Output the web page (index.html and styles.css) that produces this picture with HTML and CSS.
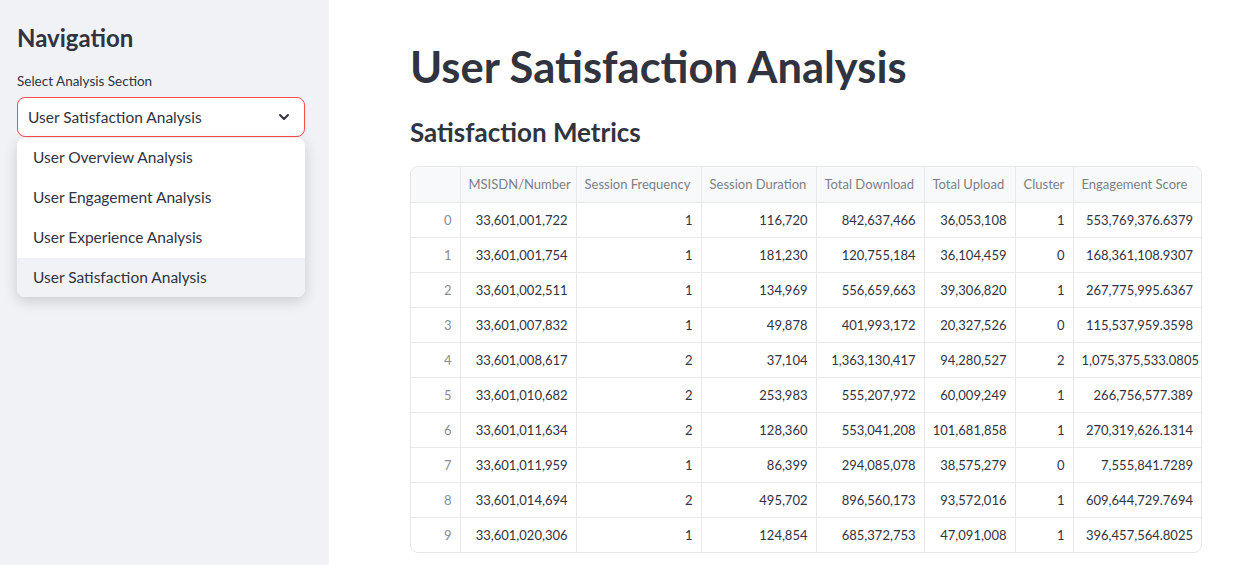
FILE: index.html
```html
<!DOCTYPE html>
<html lang="en">
<head>
<meta charset="utf-8">
<title>User Satisfaction Analysis</title>
<link rel="stylesheet" href="styles.css">
</head>
<body>
<div class="app">
  <aside class="sidebar">
    <h2 class="side-title">Navigation</h2>
    <div class="field-label">Select Analysis Section</div>
    <div class="select-wrap">
      <div class="select">
        <span class="select-value">User Satisfaction Analysis</span>
        <svg class="chev" width="16" height="16" viewBox="0 0 24 24"><path d="M6 9l6 6 6-6" fill="none" stroke="#31333f" stroke-width="3" stroke-linecap="round" stroke-linejoin="round"/></svg>
      </div>
      <ul class="menu">
        <li class="opt">User Overview Analysis</li>
        <li class="opt">User Engagement Analysis</li>
        <li class="opt">User Experience Analysis</li>
        <li class="opt active">User Satisfaction Analysis</li>
      </ul>
    </div>
  </aside>
  <main class="main">
    <h1 class="title">User Satisfaction Analysis</h1>
    <h2 class="subtitle">Satisfaction Metrics</h2>
    <div class="table-wrap">
      <table class="grid">
        <colgroup>
          <col class="c0"><col class="c1"><col class="c2"><col class="c3"><col class="c4"><col class="c5"><col class="c6"><col class="c7">
        </colgroup>
        <thead>
          <tr><th></th><th>MSISDN/Number</th><th>Session Frequency</th><th>Session Duration</th><th>Total Download</th><th>Total Upload</th><th>Cluster</th><th>Engagement Score</th></tr>
        </thead>
        <tbody>
          <tr><td class="idx">0</td><td>33,601,001,722</td><td>1</td><td>116,720</td><td>842,637,466</td><td>36,053,108</td><td>1</td><td>553,769,376.6379</td></tr>
          <tr><td class="idx">1</td><td>33,601,001,754</td><td>1</td><td>181,230</td><td>120,755,184</td><td>36,104,459</td><td>0</td><td>168,361,108.9307</td></tr>
          <tr><td class="idx">2</td><td>33,601,002,511</td><td>1</td><td>134,969</td><td>556,659,663</td><td>39,306,820</td><td>1</td><td>267,775,995.6367</td></tr>
          <tr><td class="idx">3</td><td>33,601,007,832</td><td>1</td><td>49,878</td><td>401,993,172</td><td>20,327,526</td><td>0</td><td>115,537,959.3598</td></tr>
          <tr><td class="idx">4</td><td>33,601,008,617</td><td>2</td><td>37,104</td><td>1,363,130,417</td><td>94,280,527</td><td>2</td><td>1,075,375,533.0805</td></tr>
          <tr><td class="idx">5</td><td>33,601,010,682</td><td>2</td><td>253,983</td><td>555,207,972</td><td>60,009,249</td><td>1</td><td>266,756,577.389</td></tr>
          <tr><td class="idx">6</td><td>33,601,011,634</td><td>2</td><td>128,360</td><td>553,041,208</td><td>101,681,858</td><td>1</td><td>270,319,626.1314</td></tr>
          <tr><td class="idx">7</td><td>33,601,011,959</td><td>1</td><td>86,399</td><td>294,085,078</td><td>38,575,279</td><td>0</td><td>7,555,841.7289</td></tr>
          <tr><td class="idx">8</td><td>33,601,014,694</td><td>2</td><td>495,702</td><td>896,560,173</td><td>93,572,016</td><td>1</td><td>609,644,729.7694</td></tr>
          <tr><td class="idx">9</td><td>33,601,020,306</td><td>1</td><td>124,854</td><td>685,372,753</td><td>47,091,008</td><td>1</td><td>396,457,564.8025</td></tr>
        </tbody>
      </table>
    </div>
  </main>
</div>
</body>
</html>
```

FILE: styles.css
```css
* { box-sizing: border-box; }
html, body { margin: 0; padding: 0; height: 100%; }
body {
  font-family: "Lato", "Noto Sans", "Liberation Sans", sans-serif;
  color: #31333f;
  background: #ffffff;
  overflow: hidden;
}
.app { display: flex; height: 565px; }

.sidebar {
  width: 329px;
  flex: 0 0 329px;
  background: #f0f2f6;
  padding: 22px 24px 0 17px;
}
.side-title {
  margin: 0;
  font-size: 24px;
  font-weight: 700;
  line-height: 32px;
  color: #31333f;
}
.field-label {
  margin-top: 18px;
  font-size: 13.5px;
  line-height: 18px;
  color: #31333f;
}
.select-wrap { margin-top: 7px; width: 288px; }
.select {
  height: 40px;
  border: 1px solid #ff4b4b;
  border-radius: 8px;
  background: #fff;
  display: flex;
  align-items: center;
  justify-content: space-between;
  padding: 0 12px 0 10px;
  font-size: 15.5px;
}
.chev { display: block; }
.menu {
  list-style: none;
  margin: 1px 0 0 0;
  padding: 0;
  background: #fff;
  border-radius: 8px;
  box-shadow: 0 4px 14px rgba(0,0,0,0.16);
  overflow: hidden;
}
.opt {
  height: 40px;
  line-height: 38px;
  padding-left: 16px;
  font-size: 15.5px;
  color: #31333f;
}
.opt.active { background: #f0f2f6; height: 39px; line-height: 38px; }

.main {
  flex: 1;
  padding: 36px 40px 0 81px;
}
.title {
  margin: 0;
  font-size: 43.5px;
  font-weight: 700;
  line-height: 60px;
  color: #31333f;
}
.subtitle {
  margin: 16px 0 0 0;
  font-size: 26px;
  font-weight: 700;
  line-height: 40px;
  color: #31333f;
}
.table-wrap {
  margin-top: 14px;
  width: 792px;
  border: 1px solid #e6e7ea;
  border-radius: 8px;
  overflow: hidden;
}
.grid {
  border-collapse: collapse;
  width: 100%;
  table-layout: fixed;
  font-size: 13px;
}
.c0 { width: 49px; }
.c1 { width: 116px; }
.c2 { width: 125px; }
.c3 { width: 115px; }
.c4 { width: 108px; }
.c5 { width: 91px; }
.c6 { width: 58px; }
.c7 { width: auto; }
.grid th, .grid td {
  height: 35px;
  padding: 0 8px;
  border-right: 1px solid #e8e9ec;
  border-bottom: 1px solid #e8e9ec;
  white-space: nowrap;
  overflow: hidden;
}
.grid th:last-child, .grid td:last-child { border-right: none; }
.grid tbody tr:last-child td { border-bottom: none; }
.grid th {
  background: #f8f9fb;
  font-weight: 400;
  color: #7c7f88;
  text-align: left;
}
.grid td { text-align: right; color: #31333f; }
.grid td.idx { color: #8a8d96; }
```
